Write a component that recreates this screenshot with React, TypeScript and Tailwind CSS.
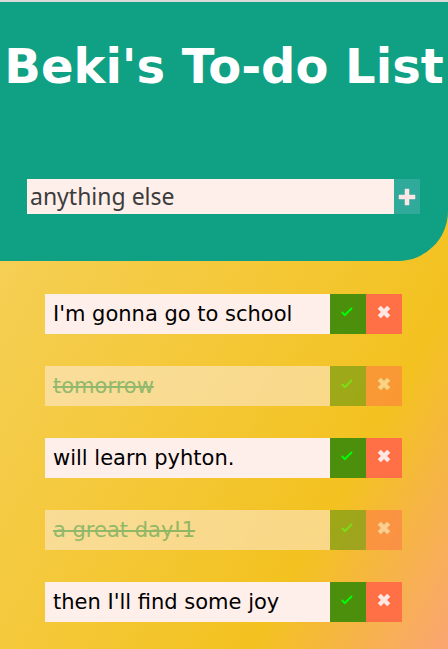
import { useState } from "react";

type Todo = { id: number; text: string; done: boolean };

const initialTodos: Todo[] = [
  { id: 1, text: "I'm gonna go to school", done: false },
  { id: 2, text: "tomorrow", done: true },
  { id: 3, text: "will learn pyhton.", done: false },
  { id: 4, text: "a great day!1", done: true },
  { id: 5, text: "then I'll find some joy", done: false },
];

function PlusIcon() {
  return (
    <svg width="18" height="18" viewBox="0 0 18 18" aria-hidden="true">
      <path d="M7 1h4v6h6v4h-6v6H7v-6H1V7h6z" fill="#ffe6e6" stroke="#ffe6e6" strokeOpacity="0.5" />
    </svg>
  );
}

function CheckIcon() {
  return (
    <svg width="12" height="10" viewBox="0 0 12 10" aria-hidden="true">
      <path d="M.8 5 3.8 8.2 11 1" fill="none" stroke="#00ff00" strokeWidth="1.9" />
    </svg>
  );
}

function CrossIcon() {
  return (
    <svg width="14" height="14" viewBox="0 0 14 14" aria-hidden="true">
      <path d="M2.3 2.3 11.7 11.7M11.7 2.3 2.3 11.7" fill="none" stroke="#ffe6e6" strokeWidth="4.4" />
    </svg>
  );
}

export default function App() {
  const [todos, setTodos] = useState(initialTodos);
  const [draft, setDraft] = useState("anything else");

  const add = () => {
    if (!draft.trim()) return;
    setTodos([...todos, { id: Date.now(), text: draft, done: false }]);
    setDraft("");
  };
  const toggle = (id: number) =>
    setTodos(todos.map((t) => (t.id === id ? { ...t, done: !t.done } : t)));
  const remove = (id: number) => setTodos(todos.filter((t) => t.id !== id));

  return (
    <div className="min-h-screen bg-[linear-gradient(120deg,#f6d365_0%,#f3c220_76%,#faa572_100%)] font-['DejaVu_Sans',sans-serif]">
      <header className="rounded-br-[50px] border-t-2 border-[#d9d9d9] bg-[#10a084] pb-[47px]">
        <h1 className="pt-8 text-center text-5xl leading-16 font-bold whitespace-nowrap text-white">
          Beki's To-do List
        </h1>
        <form
          className="mr-7 ml-[27px] mt-[81px] flex h-[35px]"
          onSubmit={(e) => {
            e.preventDefault();
            add();
          }}
        >
          <input
            aria-label="New to-do"
            value={draft}
            onChange={(e) => setDraft(e.target.value)}
            className="min-w-0 flex-1 bg-[#ffefeb] px-[3px] font-['Noto_Sans',sans-serif] text-[23px] text-[#3c3c3c] outline-none"
          />
          <button
            type="submit"
            aria-label="Add"
            className="flex w-[26px] items-center justify-center bg-[#30aa9a]"
          >
            <PlusIcon />
          </button>
        </form>
      </header>
      <ul className="flex flex-col gap-8 pt-[33px] pr-[46px] pb-6 pl-[45px]">
        {todos.map((t) => (
          <li key={t.id} className={t.done ? "flex h-10 opacity-50" : "flex h-10"}>
            <span
              className={
                t.done
                  ? "flex-1 bg-[#ffefeb] px-2 text-[21px] leading-10 text-[#30aa9a] line-through"
                  : "flex-1 bg-[#ffefeb] px-2 text-[21px] leading-10 text-black"
              }
            >
              {t.text}
            </span>
            <button
              type="button"
              aria-label="Complete"
              onClick={() => toggle(t.id)}
              className="flex w-9 items-center justify-center bg-[#4b8f0c] pr-0.5 pb-1"
            >
              <CheckIcon />
            </button>
            <button
              type="button"
              aria-label="Delete"
              onClick={() => remove(t.id)}
              className="flex w-9 items-center justify-center bg-[#ff7047] pb-1"
            >
              <CrossIcon />
            </button>
          </li>
        ))}
      </ul>
    </div>
  );
}
